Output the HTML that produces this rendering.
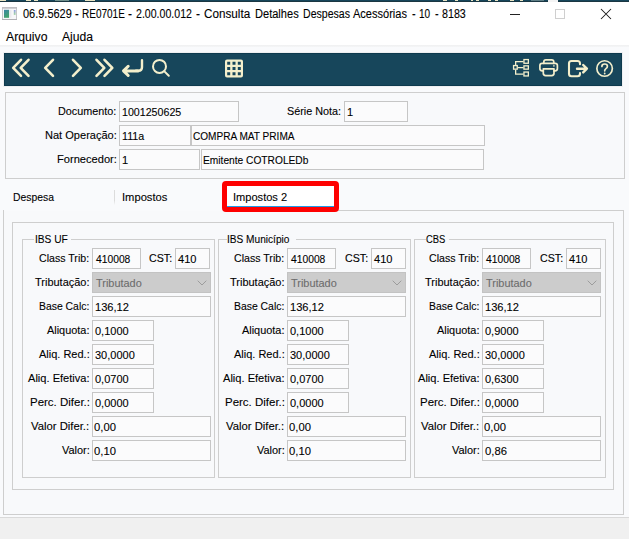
<!DOCTYPE html>
<html lang="pt-BR"><head><meta charset="utf-8"><title>RE0701E</title>
<style>
html,body{margin:0;padding:0}
body{width:629px;height:539px;position:relative;overflow:hidden;background:#fff;font-family:"Liberation Sans", sans-serif}
.b{position:absolute;box-sizing:content-box}
.t{position:absolute;white-space:pre;line-height:14px;font-family:"Liberation Sans", sans-serif;transform-origin:0 0;-webkit-text-stroke:0.1px currentColor}
</style></head>
<body>
<div class="b" style="left:0;top:0;width:629px;height:2px;background:linear-gradient(#17465b 50%,#1b3742 50%)"></div>
<div class="b" style="left:0px;top:0;width:6px;height:1px;background:#e9e5c5"></div>
<div class="b" style="left:26px;top:0;width:5px;height:1px;background:#e9e5c5"></div>
<div class="b" style="left:34px;top:0;width:4px;height:1px;background:#e9e5c5"></div>
<div class="b" style="left:85px;top:0;width:10px;height:1px;background:#e9e5c5"></div>
<div class="b" style="left:443px;top:0;width:4px;height:1px;background:#e9e5c5"></div>
<div class="b" style="left:455px;top:0;width:3px;height:1px;background:#e9e5c5"></div>
<div class="b" style="left:471px;top:0;width:2px;height:1px;background:#e9e5c5"></div>
<div class="b" style="left:476px;top:0;width:3px;height:1px;background:#e9e5c5"></div>
<div class="b" style="left:488px;top:0;width:3px;height:1px;background:#e9e5c5"></div>
<div class="b" style="left:495px;top:0;width:3px;height:1px;background:#e9e5c5"></div>
<div class="b" style="left:510px;top:0;width:4px;height:1px;background:#e9e5c5"></div>
<div class="b" style="left:520px;top:0;width:3px;height:1px;background:#e9e5c5"></div>
<div class="b" style="left:55px;top:0;width:14px;height:1px;background:#6f8f8c"></div>
<div class="b" style="left:531px;top:0;width:13px;height:1px;background:#5f7f86"></div>
<div class="b" style="left:548px;top:0;width:10px;height:2px;background:#f4f4f4"></div>
<div class="b" style="left:0;top:2px;width:629px;height:43px;background:#fff"></div>
<svg class="b" style="left:2px;top:7px" width="15" height="13" viewBox="0 0 15 13">
<defs><linearGradient id="g1" x1="0" y1="0" x2="0.4" y2="1"><stop offset="0" stop-color="#3b86a6"/><stop offset="1" stop-color="#42a36d"/></linearGradient>
<linearGradient id="g2" x1="0" y1="0" x2="0" y2="1"><stop offset="0" stop-color="#7a86e0"/><stop offset="1" stop-color="#8fd08a"/></linearGradient></defs>
<rect x="0.5" y="0.5" width="14" height="12" fill="#f7f7f9" stroke="#c6c6ca"/>
<rect x="0" y="0" width="15" height="1.7" fill="#bebec2"/>
<rect x="0" y="12" width="15" height="1" fill="#b0b0b4"/>
<rect x="2" y="2.8" width="5.1" height="8" fill="url(#g1)"/>
<rect x="8.3" y="2.8" width="1" height="8" fill="#e4e4ea"/>
<rect x="11.8" y="3" width="1.8" height="4.9" fill="url(#g2)" opacity="0.8"/>
</svg>
<span class="t" style="left:23px;top:7px;font-size:12px;color:#000;transform:scaleX(0.914)">06.9.5629</span>
<span class="t" style="left:75px;top:7px;font-size:12px;color:#000;transform:scaleX(0.937)">-</span>
<span class="t" style="left:82px;top:7px;font-size:12px;color:#000;transform:scaleX(0.834)">RE0701E</span>
<span class="t" style="left:128px;top:7px;font-size:12px;color:#000;transform:scaleX(1)">-</span>
<span class="t" style="left:136px;top:7px;font-size:12px;color:#000;transform:scaleX(0.882)">2.00.00.012</span>
<span class="t" style="left:196px;top:7px;font-size:12px;color:#000;transform:scaleX(1)">-</span>
<span class="t" style="left:204px;top:7px;font-size:12px;color:#000;transform:scaleX(0.975)">Consulta</span>
<span class="t" style="left:255px;top:7px;font-size:12px;color:#000;transform:scaleX(0.922)">Detalhes</span>
<span class="t" style="left:303px;top:7px;font-size:12px;color:#000;transform:scaleX(0.88)">Despesas</span>
<span class="t" style="left:353px;top:7px;font-size:12px;color:#000;transform:scaleX(0.919)">Acessórias</span>
<span class="t" style="left:412px;top:7px;font-size:12px;color:#000;transform:scaleX(0.907)">-</span>
<span class="t" style="left:419px;top:7px;font-size:12px;color:#000;transform:scaleX(0.836)">10</span>
<span class="t" style="left:435px;top:7px;font-size:12px;color:#000;transform:scaleX(0.907)">-</span>
<span class="t" style="left:442px;top:7px;font-size:12px;color:#000;transform:scaleX(0.892)">8183</span>
<div class="b" style="left:510px;top:14px;width:10px;height:1px;background:#222"></div>
<div class="b" style="left:555px;top:9px;width:8px;height:8px;border:1px solid #cfcfcf"></div>
<svg class="b" style="left:600px;top:8px" width="12" height="12" viewBox="0 0 12 12"><path d="M1 1 L11 11 M11 1 L1 11" stroke="#1a1a1a" stroke-width="1.05" fill="none"/></svg>
<span class="t" style="left:6px;top:30px;font-size:12px;color:#000;transform:scaleX(1.019)">Arquivo</span>
<span class="t" style="left:62px;top:30px;font-size:12px;color:#000;transform:scaleX(1.012)">Ajuda</span>
<div class="b" style="left:0;top:45px;width:629px;height:472px;background:#f9fafc"></div>
<div class="b" style="left:0;top:45px;width:629px;height:2px;background:linear-gradient(#f0f0f1,#f5f6f7)"></div>
<div class="b" style="left:3px;top:52px;width:620px;height:35px;background:#eeeff1"></div>
<div class="b" style="left:4px;top:53px;width:618px;height:33px;background:#0e3a4e"></div>
<div class="b" style="left:5px;top:54px;width:616px;height:31px;background:#17465b"></div>
<svg class="b" style="left:0;top:50px" width="629" height="40" viewBox="0 50 629 40" fill="none" stroke="#f4efcc" stroke-linecap="round" stroke-linejoin="round">
<g stroke-width="2.6">
<path d="M21 59.8 L13.2 67.8 L21 75.8"/><path d="M28.5 59.8 L20.7 67.8 L28.5 75.8"/>
<path d="M53 59.8 L45.2 67.8 L53 75.8"/>
<path d="M73 59.8 L80.8 67.8 L73 75.8"/>
<path d="M96.5 59.8 L104.3 67.8 L96.5 75.8"/><path d="M104.5 59.8 L112.3 67.8 L104.5 75.8"/>
<path d="M142 60.2 L142 67.3 Q142 70.8 138.5 70.8 L136 70.8" stroke-width="2.4"/>
<path d="M138 70.9 L124.5 70.9 M128.2 66.3 L123.5 70.9 L128.2 75.5" stroke-width="3"/>
</g>
<g stroke-width="2">
<circle cx="159.5" cy="66.4" r="6.5"/><path d="M164.4 71.4 L168.8 75.8"/>
</g>
<!-- grid -->
<g stroke="none" fill="#f4efcc">
<path fill-rule="evenodd" d="M227 59.5 h14 a2 2 0 0 1 2 2 v14 a2 2 0 0 1 -2 2 h-14 a2 2 0 0 1 -2 -2 v-14 a2 2 0 0 1 2 -2 z
M227.2 61.7 h3 v3 h-3 z M232.5 61.7 h3 v3 h-3 z M237.8 61.7 h3 v3 h-3 z
M227.2 67 h3 v3 h-3 z M232.5 67 h3 v3 h-3 z M237.8 67 h3 v3 h-3 z
M227.2 72.3 h3 v3 h-3 z M232.5 72.3 h3 v3 h-3 z M237.8 72.3 h3 v3 h-3 z"/>
</g>
<!-- tree -->
<g stroke-width="1.3" stroke-linecap="butt" stroke-linejoin="miter">
<rect x="513.55" y="65.55" width="3.7" height="3.6"/>
<rect x="523.95" y="59.55" width="4.4" height="3.7"/>
<rect x="523.95" y="65.85" width="4.4" height="3.3"/>
<rect x="523.95" y="72.05" width="4.4" height="3.9"/>
<path d="M515.65 65 V61.65 H523.4 M517.8 67.65 H523.4 M515.65 69.7 V74.15 H523.4"/>
</g>
<!-- printer -->
<g stroke-width="1.7">
<path d="M543.8 63.3 V62 Q543.8 59.9 545.9 59.9 H551.7 Q553.8 59.9 553.8 62 V63.3"/>
<path d="M543.3 70.9 H542.2 Q539.9 70.9 539.9 68.6 V65.6 Q539.9 63.3 542.2 63.3 H555.1 Q557.4 63.3 557.4 65.6 V68.6 Q557.4 70.9 555.1 70.9 H554"/>
<path d="M543.3 68.8 H554 V73.3 Q554 75.6 551.7 75.6 H545.6 Q543.3 75.6 543.3 73.3 Z"/>
</g>
<circle cx="553.9" cy="65.9" r="0.8" fill="#f4efcc" stroke="none"/>
<!-- exit -->
<g stroke-width="2.1">
<path d="M580 64.3 V63.5 Q580 61 577.5 61 H571.5 Q569 61 569 63.5 V73.7 Q569 76.2 571.5 76.2 H577.5 Q580 76.2 580 73.7 V73"/>
<path d="M577 68.7 H586 M583.2 65 L586.9 68.7 L583.2 72.4" stroke-width="2.4"/>
</g>
<!-- help -->
<circle cx="604.6" cy="68.5" r="7.75" stroke-width="1.7"/>
<path d="M601.9 66.4 Q601.9 64 604.6 64 Q607.4 64 607.4 66.3 Q607.4 67.8 606 68.6 Q604.7 69.4 604.7 70.8" stroke-width="1.7"/>
<circle cx="604.7" cy="73.5" r="0.9" fill="#f4efcc" stroke="none"/>
</svg>
<div class="b" style="left:5px;top:92px;width:618px;height:85px;background:#f8f9fb;border:1px solid #cecece;"></div>
<span class="t" style="left:58px;top:104px;font-size:11px;color:#000;transform:scaleX(0.982)">Documento:</span>
<div class="b" style="left:119px;top:101px;width:118px;height:19px;background:#fbfbfc;border:1px solid #c6c6c6;"></div><span class="t" style="left:122px;top:105px;font-size:11px;color:#000;transform:scaleX(0.968)">1001250625</span>
<span class="t" style="left:287px;top:104px;font-size:11px;color:#000;transform:scaleX(0.983)">Série Nota:</span>
<div class="b" style="left:344px;top:101px;width:62px;height:19px;background:#fbfbfc;border:1px solid #c6c6c6;"></div><span class="t" style="left:347px;top:105px;font-size:11px;color:#000;transform:scaleX(1)">1</span>
<span class="t" style="left:45px;top:128px;font-size:11px;color:#000;transform:scaleX(1.004)">Nat Operação:</span>
<div class="b" style="left:119px;top:125px;width:70px;height:19px;background:#fbfbfc;border:1px solid #c6c6c6;"></div><span class="t" style="left:122px;top:129px;font-size:11px;color:#000;transform:scaleX(0.973)">111a</span>
<div class="b" style="left:191px;top:125px;width:292px;height:19px;background:#fbfbfc;border:1px solid #c6c6c6;"></div><span class="t" style="left:193px;top:129px;font-size:11px;color:#000;transform:scaleX(0.916)">COMPRA MAT PRIMA</span>
<span class="t" style="left:57px;top:152px;font-size:11px;color:#000;transform:scaleX(1.009)">Fornecedor:</span>
<div class="b" style="left:119px;top:149px;width:79px;height:19px;background:#fbfbfc;border:1px solid #c6c6c6;"></div><span class="t" style="left:122px;top:153px;font-size:11px;color:#000;transform:scaleX(1)">1</span>
<div class="b" style="left:201px;top:149px;width:281px;height:19px;background:#fbfbfc;border:1px solid #c6c6c6;"></div><span class="t" style="left:203px;top:153px;font-size:11px;color:#000;transform:scaleX(0.927)">Emitente COTROLEDb</span>
<div class="b" style="left:3px;top:210px;width:619px;height:303px;background:#f8f9fb;border:1px solid #cecece"></div>
<div class="b" style="left:4px;top:205px;width:334px;height:6px;background:#f9fafc"></div>
<span class="t" style="left:13px;top:190px;font-size:11px;color:#000;transform:scaleX(0.942)">Despesa</span>
<div class="b" style="left:114px;top:190px;width:1px;height:15px;background:linear-gradient(#dcdcdc 70%,#f9fafc)"></div>
<span class="t" style="left:122px;top:190px;font-size:11px;color:#000;transform:scaleX(1.016)">Impostos</span>
<div class="b" style="left:227px;top:186px;width:107px;height:20px;background:#fff"></div>
<div class="b" style="left:227px;top:206px;width:107px;height:1px;background:#1e9be8"></div>
<span class="t" style="left:233px;top:190px;font-size:11px;color:#000;transform:scaleX(1.006)">Impostos 2</span>
<div class="b" style="left:222px;top:181px;width:107px;height:21px;border:5px solid #fe0000;border-radius:4px"></div>
<div class="b" style="left:12px;top:222px;width:600px;height:266px;background:#f8f9fb;border:1px solid #cecece;"></div>
<div class="b" style="left:22px;top:239px;width:191px;height:237px;border:1px solid #cecece;"></div><div class="b" style="left:34px;top:238px;width:37px;height:3px;background:#f8f9fb"></div><span class="t" style="left:35px;top:232px;font-size:11px;color:#000;transform:scaleX(0.925)">IBS UF</span><span class="t" style="left:39px;top:251px;font-size:11px;color:#000;transform:scaleX(0.964)">Class Trib:</span><span class="t" style="left:35px;top:275px;font-size:11px;color:#000;transform:scaleX(0.997)">Tributação:</span><span class="t" style="left:39px;top:299px;font-size:11px;color:#000;transform:scaleX(0.946)">Base Calc:</span><span class="t" style="left:47px;top:323px;font-size:11px;color:#000;transform:scaleX(0.991)">Aliquota:</span><span class="t" style="left:39px;top:347px;font-size:11px;color:#000;transform:scaleX(0.999)">Aliq. Red.:</span><span class="t" style="left:28px;top:371px;font-size:11px;color:#000;transform:scaleX(1.007)">Aliq. Efetiva:</span><span class="t" style="left:30px;top:395px;font-size:11px;color:#000;transform:scaleX(1.044)">Perc. Difer.:</span><span class="t" style="left:31px;top:419px;font-size:11px;color:#000;transform:scaleX(1.026)">Valor Difer.:</span><span class="t" style="left:62px;top:443px;font-size:11px;color:#000;transform:scaleX(0.996)">Valor:</span><div class="b" style="left:92px;top:248px;width:47px;height:19px;background:#fbfbfc;border:1px solid #c6c6c6;"></div><span class="t" style="left:96px;top:252px;font-size:11px;color:#000;transform:scaleX(0.935)">410008</span><span class="t" style="left:149px;top:251px;font-size:11px;color:#000;transform:scaleX(0.97)">CST:</span><div class="b" style="left:175px;top:248px;width:33px;height:19px;background:#fbfbfc;border:1px solid #c6c6c6;"></div><span class="t" style="left:178px;top:252px;font-size:11px;color:#000;transform:scaleX(1.006)">410</span><div class="b" style="left:92px;top:272px;width:117px;height:19px;background:#cccccc;border:1px solid #c3c3c3;"></div><span class="t" style="left:96px;top:276px;font-size:11px;color:#6d6d6d;transform:scaleX(0.992)">Tributado</span><svg class="b" style="left:197px;top:280px" width="10" height="6" viewBox="0 0 10 6"><path d="M0.7 0.7 L5 5 L9.3 0.7" stroke="#9c9c9c" stroke-width="1" fill="none"/></svg><div class="b" style="left:92px;top:296px;width:117px;height:19px;background:#fbfbfc;border:1px solid #c6c6c6;"></div><span class="t" style="left:95px;top:300px;font-size:11px;color:#000;transform:scaleX(1.01)">136,12</span><div class="b" style="left:92px;top:320px;width:60px;height:19px;background:#fbfbfc;border:1px solid #c6c6c6;"></div><span class="t" style="left:95px;top:324px;font-size:11px;color:#000;transform:scaleX(1)">0,1000</span><div class="b" style="left:92px;top:344px;width:60px;height:19px;background:#fbfbfc;border:1px solid #c6c6c6;"></div><span class="t" style="left:95px;top:348px;font-size:11px;color:#000;transform:scaleX(1)">30,0000</span><div class="b" style="left:92px;top:368px;width:60px;height:19px;background:#fbfbfc;border:1px solid #c6c6c6;"></div><span class="t" style="left:95px;top:372px;font-size:11px;color:#000;transform:scaleX(1)">0,0700</span><div class="b" style="left:92px;top:392px;width:60px;height:19px;background:#fbfbfc;border:1px solid #c6c6c6;"></div><span class="t" style="left:95px;top:396px;font-size:11px;color:#000;transform:scaleX(1)">0,0000</span><div class="b" style="left:92px;top:416px;width:117px;height:19px;background:#fbfbfc;border:1px solid #c6c6c6;"></div><span class="t" style="left:94px;top:420px;font-size:11px;color:#000;transform:scaleX(1.022)">0,00</span><div class="b" style="left:92px;top:440px;width:117px;height:19px;background:#fbfbfc;border:1px solid #c6c6c6;"></div><span class="t" style="left:94px;top:444px;font-size:11px;color:#000;transform:scaleX(1.022)">0,10</span>
<div class="b" style="left:218px;top:239px;width:191px;height:237px;border:1px solid #cecece;"></div><div class="b" style="left:227px;top:238px;width:69px;height:3px;background:#f8f9fb"></div><span class="t" style="left:227px;top:232px;font-size:11px;color:#000;transform:scaleX(0.919)">IBS Município</span><span class="t" style="left:234px;top:251px;font-size:11px;color:#000;transform:scaleX(0.964)">Class Trib:</span><span class="t" style="left:230px;top:275px;font-size:11px;color:#000;transform:scaleX(0.997)">Tributação:</span><span class="t" style="left:234px;top:299px;font-size:11px;color:#000;transform:scaleX(0.946)">Base Calc:</span><span class="t" style="left:242px;top:323px;font-size:11px;color:#000;transform:scaleX(0.991)">Aliquota:</span><span class="t" style="left:234px;top:347px;font-size:11px;color:#000;transform:scaleX(0.999)">Aliq. Red.:</span><span class="t" style="left:223px;top:371px;font-size:11px;color:#000;transform:scaleX(1.007)">Aliq. Efetiva:</span><span class="t" style="left:225px;top:395px;font-size:11px;color:#000;transform:scaleX(1.044)">Perc. Difer.:</span><span class="t" style="left:226px;top:419px;font-size:11px;color:#000;transform:scaleX(1.026)">Valor Difer.:</span><span class="t" style="left:257px;top:443px;font-size:11px;color:#000;transform:scaleX(0.996)">Valor:</span><div class="b" style="left:287px;top:248px;width:47px;height:19px;background:#fbfbfc;border:1px solid #c6c6c6;"></div><span class="t" style="left:291px;top:252px;font-size:11px;color:#000;transform:scaleX(0.935)">410008</span><span class="t" style="left:345px;top:251px;font-size:11px;color:#000;transform:scaleX(0.97)">CST:</span><div class="b" style="left:371px;top:248px;width:33px;height:19px;background:#fbfbfc;border:1px solid #c6c6c6;"></div><span class="t" style="left:374px;top:252px;font-size:11px;color:#000;transform:scaleX(1.006)">410</span><div class="b" style="left:287px;top:272px;width:117px;height:19px;background:#cccccc;border:1px solid #c3c3c3;"></div><span class="t" style="left:291px;top:276px;font-size:11px;color:#6d6d6d;transform:scaleX(0.992)">Tributado</span><svg class="b" style="left:392px;top:280px" width="10" height="6" viewBox="0 0 10 6"><path d="M0.7 0.7 L5 5 L9.3 0.7" stroke="#9c9c9c" stroke-width="1" fill="none"/></svg><div class="b" style="left:287px;top:296px;width:117px;height:19px;background:#fbfbfc;border:1px solid #c6c6c6;"></div><span class="t" style="left:290px;top:300px;font-size:11px;color:#000;transform:scaleX(1.01)">136,12</span><div class="b" style="left:287px;top:320px;width:60px;height:19px;background:#fbfbfc;border:1px solid #c6c6c6;"></div><span class="t" style="left:290px;top:324px;font-size:11px;color:#000;transform:scaleX(1)">0,1000</span><div class="b" style="left:287px;top:344px;width:60px;height:19px;background:#fbfbfc;border:1px solid #c6c6c6;"></div><span class="t" style="left:290px;top:348px;font-size:11px;color:#000;transform:scaleX(1)">30,0000</span><div class="b" style="left:287px;top:368px;width:60px;height:19px;background:#fbfbfc;border:1px solid #c6c6c6;"></div><span class="t" style="left:290px;top:372px;font-size:11px;color:#000;transform:scaleX(1)">0,0700</span><div class="b" style="left:287px;top:392px;width:60px;height:19px;background:#fbfbfc;border:1px solid #c6c6c6;"></div><span class="t" style="left:290px;top:396px;font-size:11px;color:#000;transform:scaleX(1)">0,0000</span><div class="b" style="left:287px;top:416px;width:117px;height:19px;background:#fbfbfc;border:1px solid #c6c6c6;"></div><span class="t" style="left:289px;top:420px;font-size:11px;color:#000;transform:scaleX(1.022)">0,00</span><div class="b" style="left:287px;top:440px;width:117px;height:19px;background:#fbfbfc;border:1px solid #c6c6c6;"></div><span class="t" style="left:289px;top:444px;font-size:11px;color:#000;transform:scaleX(1.022)">0,10</span>
<div class="b" style="left:414px;top:239px;width:190px;height:237px;border:1px solid #cecece;"></div><div class="b" style="left:426px;top:238px;width:23px;height:3px;background:#f8f9fb"></div><span class="t" style="left:426px;top:232px;font-size:11px;color:#000;transform:scaleX(0.855)">CBS</span><span class="t" style="left:429px;top:251px;font-size:11px;color:#000;transform:scaleX(0.964)">Class Trib:</span><span class="t" style="left:425px;top:275px;font-size:11px;color:#000;transform:scaleX(0.997)">Tributação:</span><span class="t" style="left:429px;top:299px;font-size:11px;color:#000;transform:scaleX(0.946)">Base Calc:</span><span class="t" style="left:437px;top:323px;font-size:11px;color:#000;transform:scaleX(0.991)">Aliquota:</span><span class="t" style="left:429px;top:347px;font-size:11px;color:#000;transform:scaleX(0.999)">Aliq. Red.:</span><span class="t" style="left:418px;top:371px;font-size:11px;color:#000;transform:scaleX(1.007)">Aliq. Efetiva:</span><span class="t" style="left:420px;top:395px;font-size:11px;color:#000;transform:scaleX(1.044)">Perc. Difer.:</span><span class="t" style="left:421px;top:419px;font-size:11px;color:#000;transform:scaleX(1.026)">Valor Difer.:</span><span class="t" style="left:452px;top:443px;font-size:11px;color:#000;transform:scaleX(0.996)">Valor:</span><div class="b" style="left:482px;top:248px;width:47px;height:19px;background:#fbfbfc;border:1px solid #c6c6c6;"></div><span class="t" style="left:486px;top:252px;font-size:11px;color:#000;transform:scaleX(0.935)">410008</span><span class="t" style="left:540px;top:251px;font-size:11px;color:#000;transform:scaleX(0.97)">CST:</span><div class="b" style="left:566px;top:248px;width:33px;height:19px;background:#fbfbfc;border:1px solid #c6c6c6;"></div><span class="t" style="left:569px;top:252px;font-size:11px;color:#000;transform:scaleX(1.006)">410</span><div class="b" style="left:482px;top:272px;width:117px;height:19px;background:#cccccc;border:1px solid #c3c3c3;"></div><span class="t" style="left:486px;top:276px;font-size:11px;color:#6d6d6d;transform:scaleX(0.992)">Tributado</span><svg class="b" style="left:587px;top:280px" width="10" height="6" viewBox="0 0 10 6"><path d="M0.7 0.7 L5 5 L9.3 0.7" stroke="#9c9c9c" stroke-width="1" fill="none"/></svg><div class="b" style="left:482px;top:296px;width:117px;height:19px;background:#fbfbfc;border:1px solid #c6c6c6;"></div><span class="t" style="left:485px;top:300px;font-size:11px;color:#000;transform:scaleX(1.01)">136,12</span><div class="b" style="left:482px;top:320px;width:60px;height:19px;background:#fbfbfc;border:1px solid #c6c6c6;"></div><span class="t" style="left:485px;top:324px;font-size:11px;color:#000;transform:scaleX(1)">0,9000</span><div class="b" style="left:482px;top:344px;width:60px;height:19px;background:#fbfbfc;border:1px solid #c6c6c6;"></div><span class="t" style="left:485px;top:348px;font-size:11px;color:#000;transform:scaleX(1)">30,0000</span><div class="b" style="left:482px;top:368px;width:60px;height:19px;background:#fbfbfc;border:1px solid #c6c6c6;"></div><span class="t" style="left:485px;top:372px;font-size:11px;color:#000;transform:scaleX(1)">0,6300</span><div class="b" style="left:482px;top:392px;width:60px;height:19px;background:#fbfbfc;border:1px solid #c6c6c6;"></div><span class="t" style="left:485px;top:396px;font-size:11px;color:#000;transform:scaleX(1)">0,0000</span><div class="b" style="left:482px;top:416px;width:117px;height:19px;background:#fbfbfc;border:1px solid #c6c6c6;"></div><span class="t" style="left:484px;top:420px;font-size:11px;color:#000;transform:scaleX(1.022)">0,00</span><div class="b" style="left:482px;top:440px;width:117px;height:19px;background:#fbfbfc;border:1px solid #c6c6c6;"></div><span class="t" style="left:485px;top:444px;font-size:11px;color:#000;transform:scaleX(1.023)">0,86</span>
<div class="b" style="left:0;top:517px;width:629px;height:1px;background:#d9d9d9"></div>
<div class="b" style="left:0;top:518px;width:629px;height:21px;background:#f0f0f0"></div>
</body></html>
